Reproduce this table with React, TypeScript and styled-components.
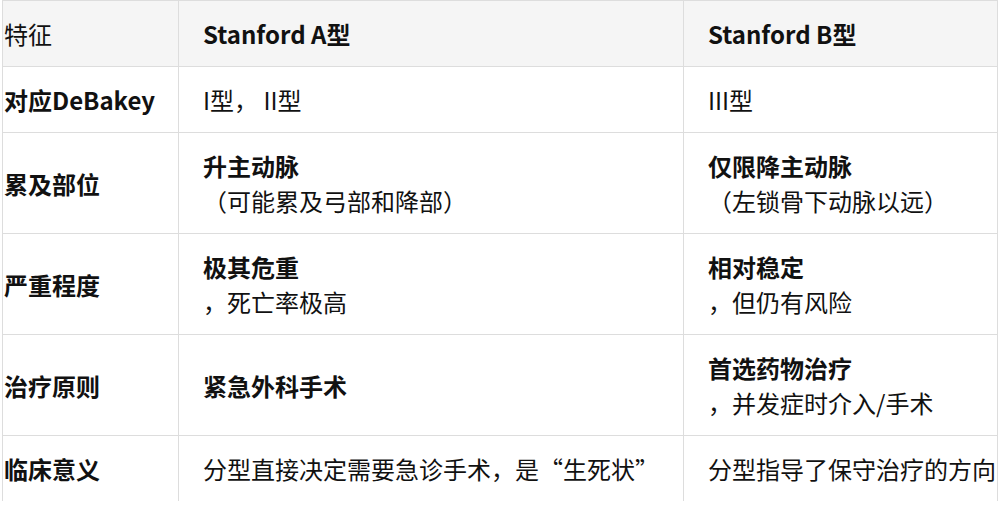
import styled, { createGlobalStyle } from "styled-components"

const GlobalStyle = createGlobalStyle`
  html, body {
    margin: 0;
    padding: 0;
    background: #ffffff;
  }
  body {
    font-family: "Noto Sans CJK SC", "Noto Sans", sans-serif;
    color: #111111;
    overflow: hidden;
  }
`;

const Page = styled.div`
  padding-left: 2px;
  width: 995px;
`;

const Table = styled.table`
  width: 995px;
  table-layout: fixed;
  border-collapse: collapse;
  font-size: 24px;
  line-height: 35px;

  tbody tr:last-child td {
    border-bottom: none;
  }
`;

const Col = styled.col<{ $w: number }>`
  width: ${(p) => p.$w}px;
`;

const HeadRow = styled.tr`
  background: #f5f5f5;
`;

const HeadCell = styled.th<{ $first?: boolean }>`
  border: 1px solid #dddddd;
  padding: 15px 0 15px ${(p) => (p.$first ? "1px" : "24px")};
  text-align: left;
  vertical-align: middle;
  white-space: nowrap;
  font-weight: ${(p) => (p.$first ? 400 : 700)};
`;

const Cell = styled.td<{ $first?: boolean; $bold?: boolean }>`
  border: 1px solid #dddddd;
  padding: 15px 0 15px ${(p) => (p.$first ? "1px" : "24px")};
  vertical-align: middle;
  white-space: nowrap;
  font-weight: ${(p) => (p.$first || p.$bold ? 700 : 400)};
`;

const Lead = styled.strong`
  display: block;
  font-weight: 700;
`;

type Entry = { lead?: string; text?: string; bold?: boolean }

const rows: { label: string; a: Entry; b: Entry }[] = [
  { label: "对应DeBakey", a: { text: "I型， II型" }, b: { text: "III型" } },
  {
    label: "累及部位",
    a: { lead: "升主动脉", text: "（可能累及弓部和降部）" },
    b: { lead: "仅限降主动脉", text: "（左锁骨下动脉以远）" },
  },
  {
    label: "严重程度",
    a: { lead: "极其危重", text: "，死亡率极高" },
    b: { lead: "相对稳定", text: "，但仍有风险" },
  },
  {
    label: "治疗原则",
    a: { text: "紧急外科手术", bold: true },
    b: { lead: "首选药物治疗", text: "，并发症时介入/手术" },
  },
  {
    label: "临床意义",
    a: { text: "分型直接决定需要急诊手术，是“生死状”" },
    b: { text: "分型指导了保守治疗的方向" },
  },
]

const EntryCell = ({ entry }: { entry: Entry }) => (
  <Cell $bold={entry.bold}>
    {entry.lead && <Lead>{entry.lead}</Lead>}
    {entry.text}
  </Cell>
)

const App = () => {
  return (
    <Page>
      <GlobalStyle />
      <Table>
        <colgroup>
          <Col $w={176} />
          <Col $w={505} />
          <Col $w={314} />
        </colgroup>
        <thead>
          <HeadRow>
            <HeadCell $first>特征</HeadCell>
            <HeadCell>Stanford A型</HeadCell>
            <HeadCell>Stanford B型</HeadCell>
          </HeadRow>
        </thead>
        <tbody>
          {rows.map((r) => (
            <tr key={r.label}>
              <Cell $first>{r.label}</Cell>
              <EntryCell entry={r.a} />
              <EntryCell entry={r.b} />
            </tr>
          ))}
        </tbody>
      </Table>
    </Page>
  )
}

export default App
